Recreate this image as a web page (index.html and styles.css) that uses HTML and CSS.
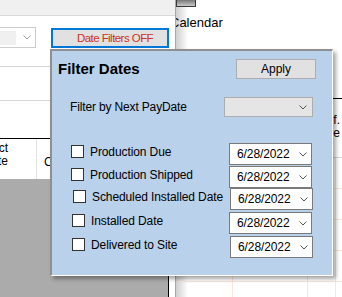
FILE: index.html
```html
<!DOCTYPE html>
<html lang="en">
<head>
  <meta charset="UTF-8">
  <meta name="viewport" content="width=device-width, initial-scale=1.0">
  <title>Filter Dates</title>
  <link rel="stylesheet" href="styles.css">
</head>

<body>
  <div class="form">
    <!-- Left part of the form -->
    <div class="left">
      <div class="topbar"></div>
      <div class="toolbar">
        <div class="combo">
          <span class="combo-fill"></span>
          <svg class="chev chev-light" width="8" height="5" viewBox="0 0 8 5"><path d="M0.5 0.5 L4 4 L7.5 0.5"/></svg>
        </div>
        <button class="filter-btn">Date Filters OFF</button>
      </div>
      <div class="band"></div>
      <div class="band band-last"></div>
      <div class="grid-head">
        <div class="head-cell first"><div class="head-text">Project<br>Date</div></div>
        <div class="head-cell second">Customer</div>
      </div>
      <div class="grid-body"></div>
    </div>

    <!-- Calendar part -->
    <div class="right">
      <div class="cal-btn"></div>
      <div class="cal-label">Calendar</div>
      <div class="sheet">
        <div class="sheet-head"><div class="sheet-title">Ref.<br>Due</div></div>
        <div class="sheet-body">
          <div class="col c1"></div>
          <div class="col c2"></div>
          <div class="col c3"></div>
          <div class="col c4"></div>
        </div>
      </div>
    </div>
  </div>

  <!-- Filter Dates popup -->
  <div class="popup">
    <div class="popup-head">
      <div class="popup-title">Filter Dates</div>
      <button class="apply">Apply</button>
    </div>

    <div class="pay-row">
      <span>Filter by Next PayDate</span>
      <div class="select">
        <svg class="chev" width="8" height="5" viewBox="0 0 8 5"><path d="M0.5 0.5 L4 4 L7.5 0.5"/></svg>
      </div>
    </div>

    <div class="dates">
      <div class="date-row">
        <label class="check"><span class="box"></span>Production Due</label>
        <div class="picker">6/28/2022<svg class="chev" width="8" height="5" viewBox="0 0 8 5"><path d="M0.5 0.5 L4 4 L7.5 0.5"/></svg></div>
      </div>
      <div class="date-row">
        <label class="check"><span class="box"></span>Production Shipped</label>
        <div class="picker">6/28/2022<svg class="chev" width="8" height="5" viewBox="0 0 8 5"><path d="M0.5 0.5 L4 4 L7.5 0.5"/></svg></div>
      </div>
      <div class="date-row">
        <label class="check"><span class="box"></span>Scheduled Installed Date</label>
        <div class="picker">6/28/2022<svg class="chev" width="8" height="5" viewBox="0 0 8 5"><path d="M0.5 0.5 L4 4 L7.5 0.5"/></svg></div>
      </div>
      <div class="date-row">
        <label class="check"><span class="box"></span>Installed Date</label>
        <div class="picker">6/28/2022<svg class="chev" width="8" height="5" viewBox="0 0 8 5"><path d="M0.5 0.5 L4 4 L7.5 0.5"/></svg></div>
      </div>
      <div class="date-row">
        <label class="check"><span class="box"></span>Delivered to Site</label>
        <div class="picker">6/28/2022<svg class="chev" width="8" height="5" viewBox="0 0 8 5"><path d="M0.5 0.5 L4 4 L7.5 0.5"/></svg></div>
      </div>
    </div>
  </div>
</body>

</html>
```

FILE: styles.css
```css
* {
    box-sizing: border-box;
}
body {
    margin: 0;
    width: 342px;
    height: 297px;
    overflow: hidden;
    position: relative;
    background: #fff;
    font-family: "Liberation Sans", Arial, sans-serif;
    font-size: 12px;
    color: #000;
}
.form {
    display: flex;
    height: 297px;
}

/* left side */
.left {
    width: 175px;
    display: flex;
    flex-direction: column;
}
.topbar {
    height: 16px;
    background: #f0f0f0;
    border-bottom: 1px solid #d9d9d9;
}
.toolbar {
    display: flex;
    align-items: flex-start;
    height: 51px;
    padding-top: 11px;
    border-bottom: 1px solid #d7d7d7;
}
.combo {
    display: flex;
    align-items: center;
    width: 37px;
    height: 21px;
    margin-left: -1px;
    padding: 2px 4px 2px 0;
    border: 1px solid #cccccc;
    background: #fff;
}
.combo-fill {
    width: 16px;
    height: 14px;
    background: #f0f0f0;
    margin-right: 7px;
}
.filter-btn {
    width: 118px;
    height: 20px;
    margin: 1px 0 0 15px;
    padding: 0 0 0 10px;
    border: 2px solid #0078d7;
    background: #e1e1e1;
    color: #cc3322;
    font-family: inherit;
    font-size: 11.5px;
    letter-spacing: -0.55px;
}
.band {
    height: 34px;
    border-bottom: 1px solid #d7d7d7;
}
.band-last {
    height: 38px;
    border-bottom-color: #000;
}
.grid-head {
    display: flex;
    height: 40px;
    background: #fff;
}
.head-cell {
    line-height: 13px;
    overflow: hidden;
}
.head-cell.first {
    width: 37px;
    padding-top: 3px;
    border-right: 1px solid #e2e2e2;
}
.head-text {
    width: 48px;
    margin-left: -40px;
    text-align: right;
}
.head-cell.second {
    padding: 17px 0 0 7px;
}
.grid-body {
    flex: 1;
    width: 169px;
    background: #ababab;
    border-right: 1px solid #000;
}

/* calendar side */
.right {
    flex: 1;
    display: flex;
    flex-direction: column;
    overflow: hidden;
    border-left: 1px solid #a8a8a8;
    background: linear-gradient(90deg, #cfcfcf, #fff 12px);
}
.cal-btn {
    width: 20px;
    height: 7px;
    border: 1px solid #3a3a3a;
    border-top: none;
    background: linear-gradient(#777, #c9c9c9);
}
.cal-label {
    margin: 8px 0 0 -6px;
    font-size: 13px;
    line-height: 15px;
}
.sheet {
    flex: 1;
    display: flex;
    flex-direction: column;
    margin: 68px 0 0 2px;
    border-top: 1px solid #000;
}
.sheet-head {
    height: 59px;
    padding: 15px 0 0 140px;
    line-height: 13px;
    border-bottom: 1px solid #d8d8d8;
}
.sheet-body {
    flex: 1;
    display: flex;
    background: repeating-linear-gradient(180deg, transparent 0 30px, #fbe4d8 30px 31px);
}
.col {
    border-right: 1px solid #fbe4d8;
}
.c1 { width: 55px; }
.c2 { width: 75px; }
.c3 { width: 28px; }
.c4 { flex: 1; border-right: none; }

/* popup */
.popup {
    position: absolute;
    left: 50px;
    top: 49px;
    width: 283px;
    height: 227px;
    background: #b9d1ea;
    border-style: solid;
    border-width: 2px 1px 1px 2px;
    border-color: #8f8f8f #fff #fff #8f8f8f;
    box-shadow: 3px 3px 4px rgba(0, 0, 0, 0.35);
}
.popup-head {
    display: flex;
    align-items: center;
    justify-content: space-between;
    padding: 8px 16px 0 6px;
}
.popup-title {
    font-size: 15px;
    font-weight: bold;
    line-height: 18px;
}
.apply {
    width: 80px;
    height: 20px;
    padding: 0;
    border: 1px solid #adadad;
    background: #e1e1e1;
    font-family: inherit;
    font-size: 12px;
    color: #000;
}
.pay-row {
    display: flex;
    align-items: center;
    justify-content: space-between;
    height: 20px;
    margin-top: 18px;
    padding: 0 19px 0 18px;
    line-height: 14px;
    letter-spacing: -0.15px;
}
.select {
    display: flex;
    align-items: center;
    justify-content: flex-end;
    width: 89px;
    height: 20px;
    padding-right: 5px;
    border: 1px solid #adadad;
    background: #e5e5e5;
}
.chev {
    display: block;
}
.chev path {
    fill: none;
    stroke: #555;
    stroke-width: 1;
}
.chev-light path {
    stroke: #a0a0a0;
}
.dates {
    margin-top: 26px;
}
.date-row {
    display: flex;
    align-items: flex-start;
    justify-content: space-between;
    height: 22px;
    padding: 0 20px 0 19px;
}
.date-row:nth-child(2) { margin-top: 1px; }
.date-row:nth-child(3) { padding: 0 19px 0 21px; }
.date-row:nth-child(4) { margin-top: 2px; padding-left: 20px; }
.date-row:nth-child(5) { margin-top: 2px; padding: 0 19px 0 20px; }
.check {
    display: flex;
    align-items: center;
    gap: 6px;
    height: 14px;
    margin-top: 1.5px;
    line-height: 14px;
    letter-spacing: -0.1px;
}
.box {
    width: 13px;
    height: 13px;
    border: 1px solid #333;
    background: #fff;
}
.picker {
    display: flex;
    align-items: center;
    justify-content: space-between;
    width: 83px;
    height: 22px;
    padding: 0 4px 0 7px;
    border: 1px solid #7a7a7a;
    background: #fff;
    line-height: 20px;
    letter-spacing: -0.1px;
}
```
